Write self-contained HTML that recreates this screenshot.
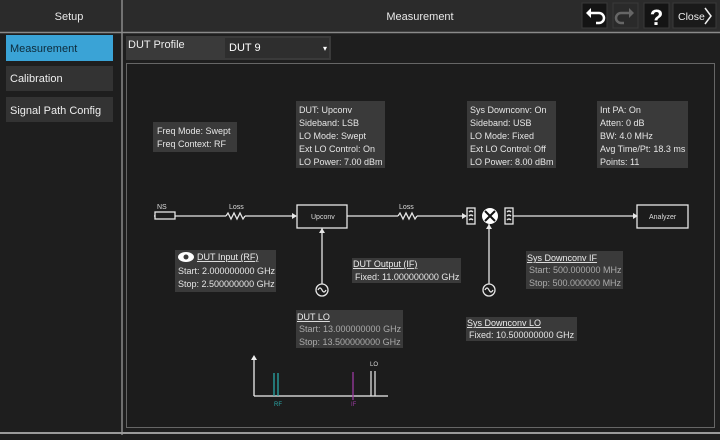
<!DOCTYPE html>
<html><head><style>
body{margin:0;width:720px;height:435px;background:#1e1e1e;overflow:hidden;font-family:"Liberation Sans",sans-serif;}
</style></head><body>
<svg width="720" height="435" xmlns="http://www.w3.org/2000/svg" font-family="Liberation Sans, sans-serif">
<rect width="720" height="435" fill="#1e1e1e"/>
<!-- header -->
<rect x="0" y="0" width="720" height="32" fill="#2b2b2b"/>
<line x1="0" y1="32.5" x2="720" y2="32.5" stroke="#8a8a8a" stroke-width="1.5"/>
<line x1="122" y1="0" x2="122" y2="435" stroke="#8a8a8a" stroke-width="1.5"/>
<line x1="0" y1="433" x2="720" y2="433" stroke="#9a9a9a" stroke-width="2"/>
<text x="69" y="20" fill="#e8e8e8" font-size="11" text-anchor="middle">Setup</text>
<text x="420" y="20" fill="#e8e8e8" font-size="11" text-anchor="middle">Measurement</text>
<!-- toolbar buttons -->
<rect x="582" y="3" width="25" height="25" fill="#141414" stroke="#3a3a3a"/>
<path d="M589 13 h10 a5 5 0 0 1 0 10 h-3" stroke="#fff" stroke-width="2.5" fill="none"/>
<path d="M586 13 l5 -5 v10 z" fill="#fff"/>
<rect x="613" y="3" width="25" height="25" fill="#2a2a2a" stroke="#3a3a3a"/>
<path d="M631 13 h-10 a5 5 0 0 0 0 10 h3" stroke="#666" stroke-width="2.5" fill="none"/>
<path d="M634 13 l-5 -5 v10 z" fill="#666"/>
<rect x="644" y="3" width="25" height="25" fill="#141414" stroke="#3a3a3a"/>
<text x="656.5" y="25" fill="#fff" font-size="22" font-weight="bold" text-anchor="middle">?</text>
<rect x="673" y="3" width="43" height="25" fill="#1a1a1a" stroke="#3a3a3a"/>
<text x="678" y="20" fill="#eee" font-size="10.5">Close</text>
<path d="M705 8 l6 8 l-6 8" stroke="#eee" stroke-width="1.5" fill="none"/>
<!-- left nav -->
<rect x="6" y="35" width="107" height="26" fill="#3aa3d6"/>
<text x="10" y="52" fill="#0d2a3a" font-size="11">Measurement</text>
<rect x="6" y="66" width="107" height="25" fill="#333"/>
<text x="10" y="82" fill="#eee" font-size="11">Calibration</text>
<rect x="6" y="97" width="107" height="25" fill="#333"/>
<text x="10" y="114" fill="#eee" font-size="11">Signal Path Config</text>
<!-- DUT profile -->
<rect x="126" y="36" width="205" height="24" fill="#3a3a3a"/>
<text x="128" y="48" fill="#eee" font-size="11">DUT Profile</text>
<rect x="225" y="38" width="104" height="20" fill="#2e2e2e"/>
<text x="229" y="51" fill="#fff" font-size="11">DUT 9</text>
<text x="323" y="51" fill="#fff" font-size="8">▾</text>
<!-- diagram box -->
<rect x="126.5" y="63.5" width="588" height="364" fill="#1c1c1c" stroke="#666" stroke-width="1"/>
<g font-size="9" fill="#e6e6e6">
<rect x="153" y="122" width="84" height="30" fill="#3a3a3a"/>
<text x="157" y="134">Freq Mode: Swept</text><text x="157" y="147">Freq Context: RF</text>
<rect x="296" y="101" width="89" height="67" fill="#3a3a3a"/>
<text x="299" y="113">DUT: Upconv</text><text x="299" y="126">Sideband: LSB</text><text x="299" y="139">LO Mode: Swept</text><text x="299" y="152">Ext LO Control: On</text><text x="299" y="165">LO Power: 7.00 dBm</text>
<rect x="467" y="101" width="89" height="67" fill="#3a3a3a"/>
<text x="470" y="113">Sys Downconv: On</text><text x="470" y="126">Sideband: USB</text><text x="470" y="139">LO Mode: Fixed</text><text x="470" y="152">Ext LO Control: Off</text><text x="470" y="165">LO Power: 8.00 dBm</text>
<rect x="597" y="101" width="91" height="67" fill="#3a3a3a"/>
<text x="600" y="113">Int PA: On</text><text x="600" y="126">Atten: 0 dB</text><text x="600" y="139">BW: 4.0 MHz</text><text x="600" y="152">Avg Time/Pt: 18.3 ms</text><text x="600" y="165">Points: 11</text>
</g>
<!-- signal chain -->
<g stroke="#e6e6e6" stroke-width="1.3" fill="none">
<line x1="154" y1="216" x2="226" y2="216"/>
<path d="M226 216 l2 -3 l3 6 l3 -6 l3 6 l3 -6 l3 6 l2 -3"/>
<line x1="245" y1="216" x2="296" y2="216"/>
<rect x="297" y="205" width="50" height="23"/>
<line x1="347" y1="216" x2="398" y2="216"/>
<path d="M398 216 l2 -3 l3 6 l3 -6 l3 6 l3 -6 l3 6 l2 -3"/>
<line x1="417" y1="216" x2="466" y2="216"/>
<rect x="467" y="208" width="8" height="16"/>
<path d="M469 212 q2 -2 4 0 M469 216 q2 -2 4 0 M469 220 q2 -2 4 0"/>
<rect x="505" y="208" width="8" height="16"/>
<path d="M507 212 q2 -2 4 0 M507 216 q2 -2 4 0 M507 220 q2 -2 4 0"/>
<line x1="513" y1="216" x2="637" y2="216"/>
<rect x="637" y="205" width="51" height="23"/>
<line x1="322" y1="228" x2="322" y2="284"/>
<circle cx="322" cy="290" r="6"/>
<path d="M318 290 q2 -4 4 0 q2 4 4 0"/>
<line x1="489" y1="224" x2="489" y2="284"/>
<circle cx="489" cy="290" r="6"/>
<path d="M485 290 q2 -4 4 0 q2 4 4 0"/>
</g>
<rect x="155" y="212" width="20" height="7" fill="#1c1c1c" stroke="#e6e6e6" stroke-width="1.3"/>
<circle cx="490" cy="216" r="8" fill="#fff"/>
<path d="M485 211 l10 10 M495 211 l-10 10" stroke="#111" stroke-width="2"/>
<path d="M292 213 l5 3 l-5 3z M633 213 l5 3 l-5 3z M462 213 l5 3 l-5 3z M319 233 l3 -5 l3 5z M486 229 l3 -5 l3 5z" fill="#e6e6e6"/>
<g font-size="7" fill="#ddd">
<text x="157" y="209">NS</text><text x="229" y="209">Loss</text><text x="399" y="209">Loss</text>
<text x="311" y="219">Upconv</text><text x="649" y="219">Analyzer</text>
</g>
<!-- info boxes lower -->
<g font-size="9">
<rect x="175" y="250" width="101" height="42" fill="#3a3a3a"/>
<ellipse cx="186" cy="257" rx="8" ry="5" fill="#fff"/><circle cx="186" cy="257" r="2.5" fill="#3a3a3a"/>
<text x="197" y="260" fill="#eee" text-decoration="underline">DUT Input (RF)</text>
<text x="178" y="274" fill="#e6e6e6">Start: 2.000000000 GHz</text>
<text x="178" y="287" fill="#e6e6e6">Stop: 2.500000000 GHz</text>
<rect x="352" y="258" width="109" height="25" fill="#3a3a3a"/>
<text x="353" y="267" fill="#eee" text-decoration="underline">DUT Output (IF)</text>
<text x="355" y="280" fill="#e6e6e6">Fixed: 11.000000000 GHz</text>
<rect x="296" y="310" width="107" height="38" fill="#3a3a3a"/>
<text x="297" y="320" fill="#eee" text-decoration="underline">DUT LO</text>
<text x="299" y="332" fill="#aaa">Start: 13.000000000 GHz</text>
<text x="299" y="345" fill="#aaa">Stop: 13.500000000 GHz</text>
<rect x="526" y="251" width="97" height="38" fill="#3a3a3a"/>
<text x="527" y="261" fill="#eee" text-decoration="underline">Sys Downconv IF</text>
<text x="529" y="273" fill="#aaa">Start: 500.000000 MHz</text>
<text x="529" y="286" fill="#aaa">Stop: 500.000000 MHz</text>
<rect x="466" y="317" width="111" height="24" fill="#3a3a3a"/>
<text x="467" y="326" fill="#eee" text-decoration="underline">Sys Downconv LO</text>
<text x="469" y="338" fill="#e6e6e6">Fixed: 10.500000000 GHz</text>
</g>
<!-- spectrum -->
<g stroke-width="1.3" fill="none">
<path d="M254 396 V358 M254 396 H388" stroke="#eee"/>
<path d="M274 373 V396 M278 373 V396" stroke="#2aa8a8"/>
<path d="M353 372 V400" stroke="#9a3aa0"/>
<path d="M371 371 V396 M375 371 V396" stroke="#ddd"/>
</g>
<path d="M251 360 l3 -5 l3 5z" fill="#eee"/>
<text x="274" y="406" fill="#2aa8a8" font-size="6">RF</text>
<text x="351" y="406" fill="#9a3aa0" font-size="6">IF</text>
<text x="370" y="366" fill="#ddd" font-size="6">LO</text>
</svg>
</body></html>
